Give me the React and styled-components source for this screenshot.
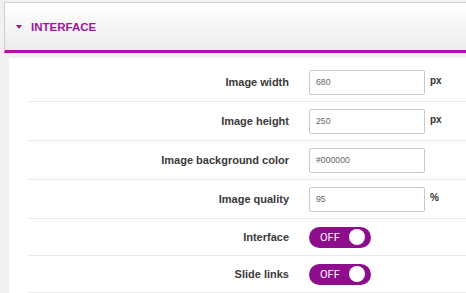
import React from "react";
import styled, { createGlobalStyle } from "styled-components";

const Global = createGlobalStyle`
  html, body {
    margin: 0;
    padding: 0;
    background: #f1f1f1;
    overflow: hidden;
  }
  body {
    font-family: "Liberation Sans", Arial, sans-serif;
  }
`;

const Page = styled.div`
  padding: 2px 0 0 4px;
`;

const Header = styled.div`
  display: flex;
  align-items: center;
  gap: 9px;
  height: 47px;
  padding-left: 11px;
  border-top: 1px solid #d2d2d2;
  border-left: 1px solid #cfcfcf;
  border-bottom: 3px solid #ad12a8;
  background: linear-gradient(#ffffff, #ececec);
`;

const Caret = styled.span`
  width: 0;
  height: 0;
  border-left: 3px solid transparent;
  border-right: 3px solid transparent;
  border-top: 4px solid #9a1598;
  margin-top: 1px;
`;

const Title = styled.h2`
  margin: 0;
  font-size: 11.5px;
  font-weight: bold;
  color: #9d169b;
`;

const Panel = styled.div`
  margin: 5px 0 0 5px;
  padding: 5px 0 0 19px;
  background: #ffffff;
`;

const Row = styled.div`
  display: grid;
  grid-template-columns: 261px 116px auto;
  column-gap: 20px;
  align-items: center;
  height: ${(p) => (p.$compact ? 36 : 38)}px;
  border-bottom: 1px solid #e8e8e8;
`;

const Label = styled.label`
  text-align: right;
  font-size: 11px;
  font-weight: bold;
  color: #3a3a3a;
`;

const Field = styled.div`
  display: flex;
  align-items: center;
  gap: 5px;
  grid-column: 2 / 4;
`;

const Input = styled.input`
  box-sizing: border-box;
  width: 116px;
  height: 25px;
  padding: 0 6px;
  border: 1px solid #c9c9c9;
  border-radius: 2px;
  font-family: "Liberation Sans", Arial, sans-serif;
  font-size: 8.7px;
  color: #666;
  outline: none;
`;

const Unit = styled.span`
  font-size: 10px;
  font-weight: bold;
  color: #333;
  margin-top: -4px;
`;

const Toggle = styled.button`
  box-sizing: border-box;
  display: flex;
  align-items: center;
  justify-content: space-between;
  width: 62px;
  height: 21px;
  padding: 0 6px 0 11px;
  border: none;
  border-radius: 11px;
  background: #8d0d8c;
  color: #fff;
  font-family: Roboto, "Open Sans", sans-serif;
  font-size: 11px;
  cursor: pointer;
`;

const Knob = styled.span`
  width: 16px;
  height: 16px;
  border-radius: 50%;
  background: radial-gradient(circle at 40% 35%, #ffffff 55%, #e4e4e4);
`;

const fields = [
  { label: "Image width", value: "680", unit: "px" },
  { label: "Image height", value: "250", unit: "px" },
  { label: "Image background color", value: "#000000", unit: "" },
  { label: "Image quality", value: "95", unit: "%" },
];

const toggles = ["Interface", "Slide links"];

export default function App() {
  return (
    <>
      <Global />
      <Page>
        <Header>
          <Caret />
          <Title>INTERFACE</Title>
        </Header>
        <Panel>
          {fields.map((f) => (
            <Row key={f.label}>
              <Label>{f.label}</Label>
              <Field>
                <Input defaultValue={f.value} />
                {f.unit && <Unit>{f.unit}</Unit>}
              </Field>
            </Row>
          ))}
          {toggles.map((t) => (
            <Row key={t} $compact>
              <Label>{t}</Label>
              <Field>
                <Toggle>
                  OFF
                  <Knob />
                </Toggle>
              </Field>
            </Row>
          ))}
        </Panel>
      </Page>
    </>
  );
}
